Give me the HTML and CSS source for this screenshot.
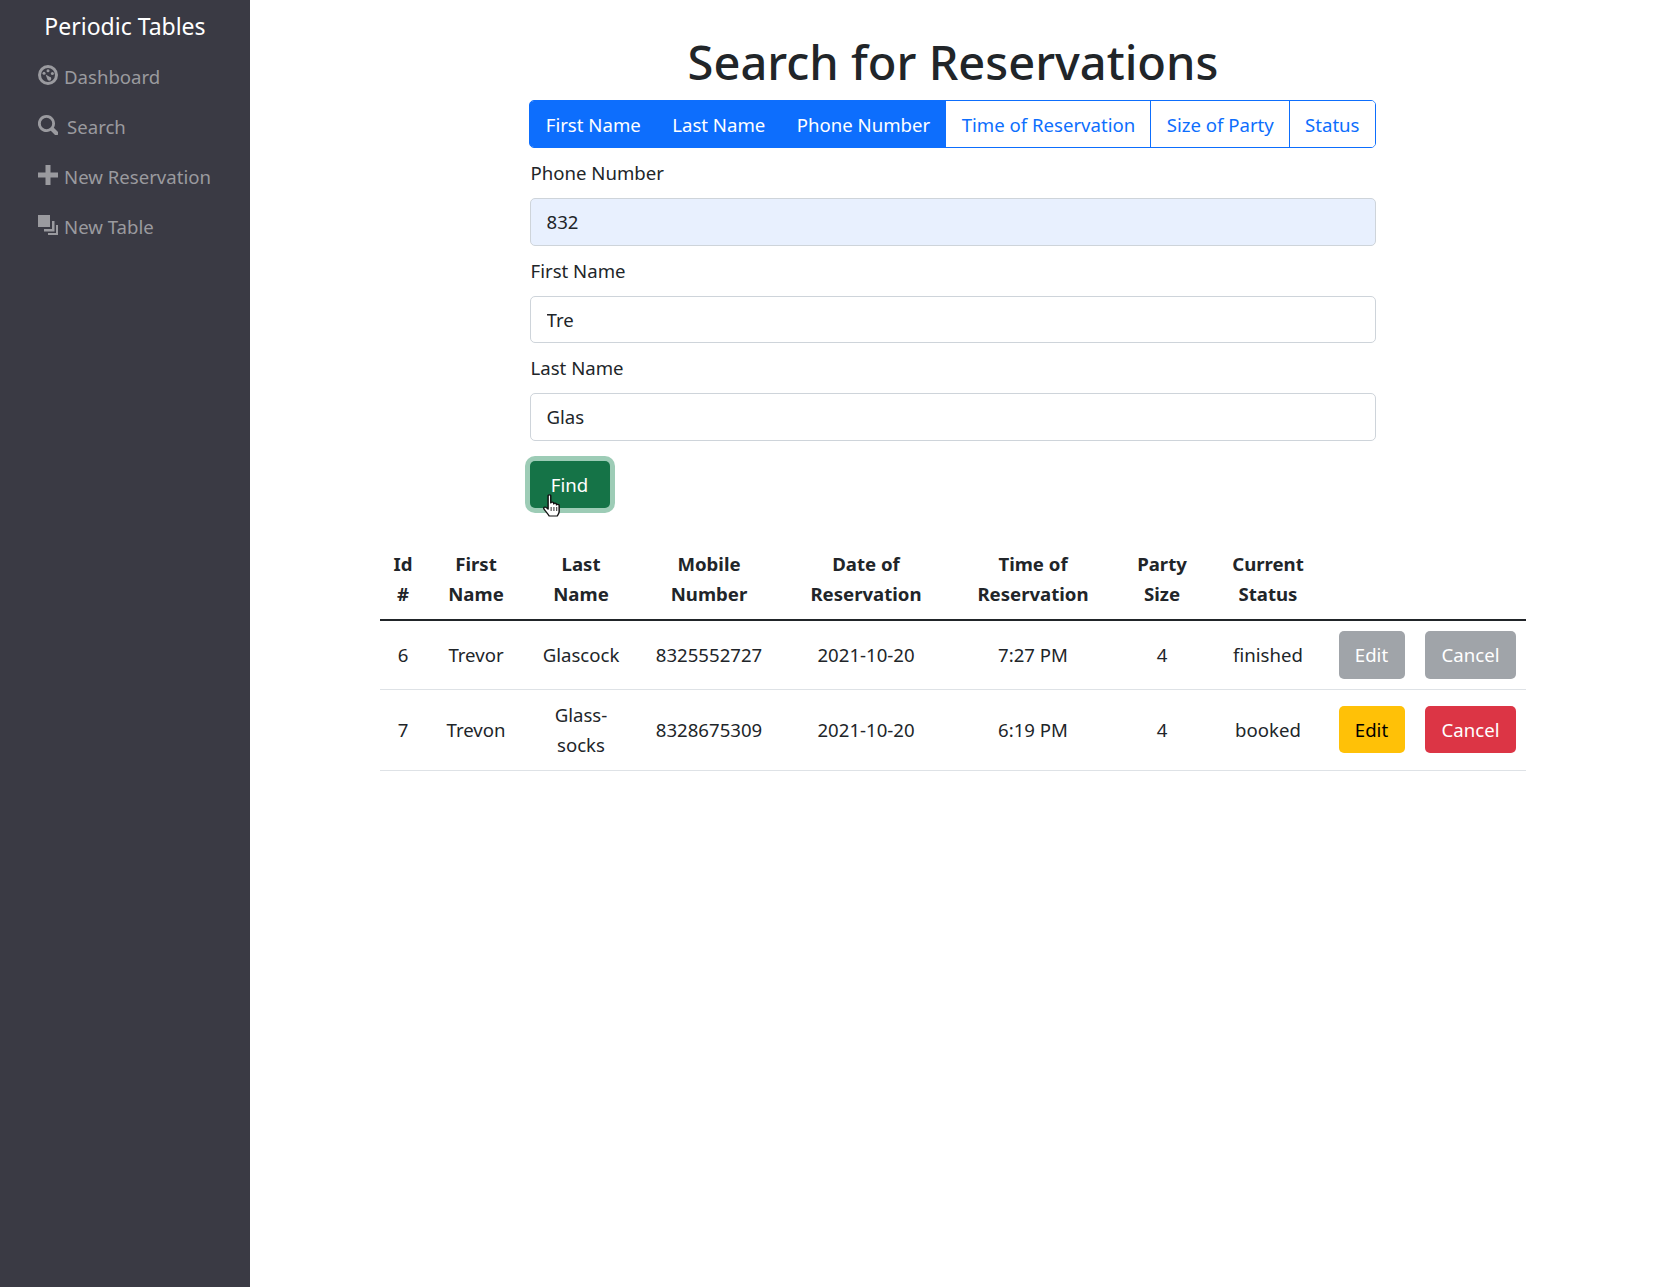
FILE: index.html
```html
<!DOCTYPE html>
<html lang="en">
<head>
    <meta charset="UTF-8">
    <title>Periodic Tables</title>
    <link rel="stylesheet" href="styles.css">
</head>
<body>
    <div class="layout">
        <nav class="sidebar">
            <div class="brand">Periodic Tables</div>
            <ul class="nav-list">
                <li>
                    <a href="#">
                        <svg class="nav-icon" viewBox="0 0 20 20"><path fill-rule="evenodd" d="M10 0a10 10 0 1 0 0 20a10 10 0 0 0 0-20zM10 3a7 7 0 1 1 0 14a7 7 0 0 1 0-14z"/><circle cx="10" cy="5.8" r="1.5"/><circle cx="14.4" cy="8.6" r="1.5"/><circle cx="6" cy="8.2" r="1.5"/><path d="M7.6 9.4l3.9 2.4a2 2 0 1 1-2.2 2.2z"/></svg>
                        Dashboard
                    </a>
                </li>
                <li>
                    <a href="#">
                        <svg class="nav-icon" viewBox="0 0 20 20"><path fill-rule="evenodd" d="M8.5 0a8.5 8.5 0 1 0 4.3 15.8l4 4a2.1 2.1 0 0 0 3-3l-4-4A8.5 8.5 0 0 0 8.5 0zM8.5 2.8a5.7 5.7 0 1 1 0 11.4a5.7 5.7 0 0 1 0-11.4z"/></svg>
                        <span class="search-label">Search</span>
                    </a>
                </li>
                <li>
                    <a href="#">
                        <svg class="nav-icon" viewBox="0 0 20 20"><path d="M7.5 0h5v7.5h7.5v5h-7.5v7.5h-5v-7.5h-7.5v-5h7.5z"/></svg>
                        New Reservation
                    </a>
                </li>
                <li>
                    <a href="#">
                        <svg class="nav-icon" viewBox="0 0 20 20"><path d="M0 0h12v12h-12z"/><path d="M14 6h2.5v10.5h-10.5v-2.500h8z"/><path d="M18 10h2v10h-10v-2h8z"/></svg>
                        New Table
                    </a>
                </li>
            </ul>
        </nav>

        <main class="content">
            <h1>Search for Reservations</h1>

            <form class="search-form" onsubmit="return false">
                <div class="btn-group">
                    <button class="toggle active">First Name</button>
                    <button class="toggle active">Last Name</button>
                    <button class="toggle active">Phone Number</button>
                    <button class="toggle">Time of Reservation</button>
                    <button class="toggle">Size of Party</button>
                    <button class="toggle toggle-last">Status</button>
                </div>

                <label for="mobile">Phone Number</label>
                <input type="text" id="mobile" class="autofilled" value="832">

                <label for="first">First Name</label>
                <input type="text" id="first" value="Tre">

                <label for="last">Last Name</label>
                <input type="text" id="last" value="Glas">

                <div class="find-wrap">
                    <button class="btn btn-find">Find</button>
                    <svg class="cursor" viewBox="0 0 14 24" preserveAspectRatio="none"><path fill="#fff" stroke="#111" stroke-width="1.2" stroke-linejoin="round" d="M4.200 1.800c0-1.300 2.200-1.300 2.200 0v7.200c0-1.200 2.400-1.200 2.400 0v1c0-1.100 2.300-1.100 2.300.2v.8c0-1 2.200-.900 2.200.3v6.200c0 2-1.200 3.400-1.600 4.500h-6.600c-1.200-2.300-3.200-5-4.300-7-.8-1.500.8-2.600 2-1.400l1.400 1.500z"/><path stroke="#111" stroke-width=".8" d="M6.700 13v4M9 13v4M11.300 13v4"/></svg>
                </div>
            </form>

            <table class="results">
                <colgroup>
                    <col class="c-id"><col class="c-first"><col class="c-last"><col class="c-mobile">
                    <col class="c-date"><col class="c-time"><col class="c-party"><col class="c-status">
                    <col class="c-edit"><col class="c-cancel">
                </colgroup>
                <thead>
                    <tr>
                        <th>Id #</th>
                        <th>First Name</th>
                        <th>Last Name</th>
                        <th>Mobile Number</th>
                        <th>Date of Reservation</th>
                        <th>Time of Reservation</th>
                        <th>Party Size</th>
                        <th>Current Status</th>
                        <th></th>
                        <th></th>
                    </tr>
                </thead>
                <tbody>
                    <tr>
                        <td>6</td>
                        <td>Trevor</td>
                        <td>Glascock</td>
                        <td>8325552727</td>
                        <td>2021-10-20</td>
                        <td>7:27 PM</td>
                        <td>4</td>
                        <td>finished</td>
                        <td><button class="btn btn-muted btn-edit">Edit</button></td>
                        <td><button class="btn btn-muted btn-cancel">Cancel</button></td>
                    </tr>
                    <tr>
                        <td>7</td>
                        <td>Trevon</td>
                        <td>Glass-socks</td>
                        <td>8328675309</td>
                        <td>2021-10-20</td>
                        <td>6:19 PM</td>
                        <td>4</td>
                        <td>booked</td>
                        <td><button class="btn btn-warning btn-edit">Edit</button></td>
                        <td><button class="btn btn-danger btn-cancel">Cancel</button></td>
                    </tr>
                </tbody>
            </table>
        </main>
    </div>
</body>
</html>
```

FILE: styles.css
```css
* {
    box-sizing: border-box;
}

body {
    margin: 0;
    font-family: "Noto Sans", "Open Sans", sans-serif;
    font-size: 18.6px;
    color: #212529;
    background-color: #fff;
}

.layout {
    display: flex;
    min-height: 1287px;
}

.sidebar {
    width: 250px;
    flex-shrink: 0;
    background-color: #3a3a44;
}

.brand {
    padding-top: 9px;
    height: 51px;
    text-align: center;
    color: #fff;
    font-size: 23px;
    line-height: 34px;
}

.nav-list {
    list-style: none;
    margin: 0;
    padding: 0;
}

.nav-list a {
    display: flex;
    align-items: center;
    gap: 6px;
    height: 50px;
    padding-left: 38px;
    color: #9a9a9f;
    text-decoration: none;
}

.nav-icon {
    width: 20px;
    height: 20px;
    fill: #9a9a9f;
    margin-top: -3px;
    flex-shrink: 0;
}

.search-label {
    margin-left: 3px;
}

.content {
    flex: 1;
    display: flex;
    flex-direction: column;
    align-items: center;
}

h1 {
    margin: 32px 0 8px;
    font-size: 47px;
    font-weight: 500;
    line-height: 60px;
}

.search-form {
    width: 847px;
    display: flex;
    flex-direction: column;
    align-items: flex-start;
}

.btn-group {
    display: flex;
    width: 847px;
    height: 48px;
    margin: 0 0 10px -1px;
    border-radius: 5px;
    overflow: hidden;
    border: 1px solid #0d6efd;
}

.toggle {
    flex: 1 1 auto;
    font: inherit;
    height: 100%;
    padding: 0 15px;
    border: 0;
    border-left: 1px solid #0d6efd;
    background-color: #fff;
    color: #0d6efd;
}

.toggle-last {
    flex-grow: 0;
}

.toggle.active {
    background-color: #0d6efd;
    color: #fff;
}

label {
    display: block;
    line-height: 30px;
    margin-bottom: 10px;
    margin-left: 1px;
}

input[type="text"] {
    width: 846px;
    height: 47.5px;
    margin-bottom: 10px;
    padding: 0 16px;
    font: inherit;
    color: #212529;
    border: 1px solid #ced4da;
    border-radius: 5px;
}

.autofilled {
    background-color: #e8f0fe;
}

.find-wrap {
    position: relative;
    margin-top: 10px;
}

.btn {
    font: inherit;
    height: 47.5px;
    border: 0;
    border-radius: 5px;
    color: #fff;
    text-align: center;
    padding: 0;
}

.btn-find {
    display: block;
    width: 80px;
    background-color: #157347;
    box-shadow: 0 0 0 5px rgba(60, 153, 110, .5);
}

.cursor {
    position: absolute;
    left: 13px;
    top: 33px;
    width: 17px;
    height: 24px;
}

.results {
    width: 1146px;
    margin-top: 31px;
    border-collapse: collapse;
    table-layout: fixed;
}

.c-id { width: 46px; }
.c-first { width: 100px; }
.c-last { width: 110px; }
.c-mobile { width: 146px; }
.c-date { width: 168px; }
.c-time { width: 166px; }
.c-party { width: 92px; }
.c-status { width: 120px; }
.c-edit { width: 87px; }
.c-cancel { width: 111px; }

.results th,
.results td {
    text-align: center;
    vertical-align: middle;
    padding: 10px;
    line-height: 30px;
}

.results th {
    font-weight: 700;
    border-bottom: 2.500px solid #212529;
}

.results td {
    border-bottom: 1px solid #dee2e6;
}

.btn-edit {
    width: 66px;
}

.btn-cancel {
    width: 91px;
}

.btn-muted {
    background-color: #a0a4a9;
}

.btn-warning {
    background-color: #ffc107;
    color: #000;
}

.btn-danger {
    background-color: #dc3545;
}
```
